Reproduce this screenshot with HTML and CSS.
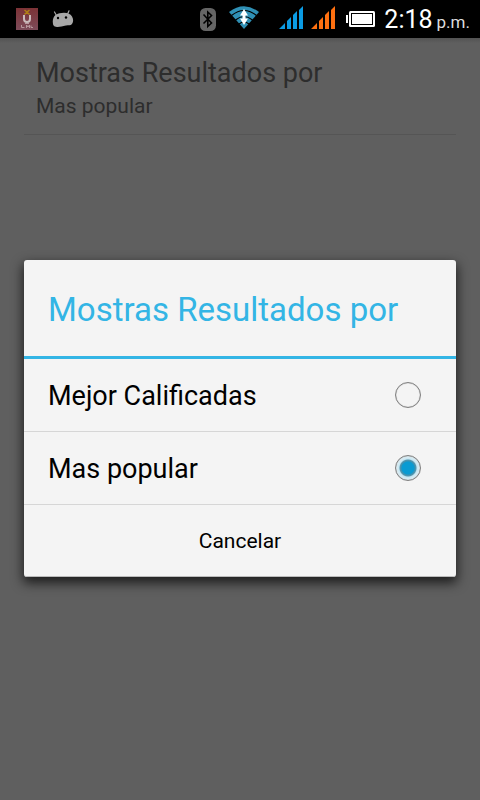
FILE: index.html
```html
<!DOCTYPE html>
<html lang="es">
<head>
<meta charset="utf-8">
<meta name="viewport" content="width=device-width, initial-scale=1">
<title>Mostras Resultados por</title>
<link rel="stylesheet" href="styles.css">
</head>
<body>
<header class="status">
  <div class="status-group notifications">
    <svg width="22" height="22" viewBox="0 0 22 22" aria-hidden="true">
      <defs><linearGradient id="app" x1="0" y1="0" x2="0" y2="1"><stop offset="0" stop-color="#7c3236"/><stop offset="1" stop-color="#7d4c5a"/></linearGradient></defs>
      <rect width="22" height="22" fill="url(#app)"/>
      <path d="M8.500 2l2.500 2 2.500-2M8.500 6.500l2.500-2.500 2.500 2.500" fill="none" stroke="#b08016" stroke-width="1.500"/>
      <path d="M8 7v4a3 3 0 0 0 6 0V7" fill="none" stroke="#cbbcbc" stroke-width="2"/>
      <path d="M9 15.500h4M5.500 17v2.500h3M10.500 20v-3l1.500 2 1.500-2v3M15 17.500v2h2" fill="none" stroke="#b8989d" stroke-width="1"/>
    </svg>
    <svg width="22" height="18" viewBox="0 0 22 18" aria-hidden="true">
      <path d="M2.500 2l2 3.500M17 .800l-1.500 3.500" stroke="#a8a8a8" stroke-width="1.200" stroke-linecap="round"/>
      <path d="M1 14C0 8 3 4 7.500 3.300C13 2 18 3 20 6.500C21.500 9 21.500 12 20 14C18.500 15.800 16.500 15 14 15.500C10 16 7 17.500 4 16.800C2 16.500 1.200 15.500 1 14Z" fill="#a8a8a8"/>
      <circle cx="6" cy="8" r="1.200"/><circle cx="14" cy="7.500" r="1.200"/>
    </svg>
  </div>
  <div class="status-group system">
    <svg class="bluetooth" width="16" height="22" viewBox="0 0 16 22" aria-hidden="true">
      <rect width="16" height="23" rx="5.500" fill="#656565"/>
      <path d="M3.500 6.500l8 8.500L7.800 18.500V4l3.700 3.500-8 8" fill="none" stroke="#000" stroke-width="1.600"/>
    </svg>
    <svg class="wifi" width="30" height="26" viewBox="0 0 30 26" aria-hidden="true">
      <path d="M0 6Q15-5.500 30 6L15 23Z" fill="#2f90b5"/>
      <path d="M2.500 9.500Q15-.500 27.500 9.500M6.500 14Q15 7 23.500 14M10 18q5-4 10 0" fill="none" stroke="#000" stroke-width="1.200"/>
      <path d="M15 3l4 6.500h-8zM15 19l-4-6.500h8z" fill="#fff"/>
      <path d="M13.500 9h3v5h-3z" fill="#fff"/>
    </svg>
    <svg class="signal-one" width="24" height="26" viewBox="0 0 24 26" aria-hidden="true">
      <path d="M0 23l6-6v6zM8 23v-8l4-4v12zM14 23V9l4-4v18zM20 23V4l4-4v23z" fill="#0b9be3"/>
    </svg>
    <svg class="signal-two" width="24" height="26" viewBox="0 0 24 26" aria-hidden="true">
      <path d="M0 23l6-6v6zM8 23v-8l4-4v12zM14 23V9l4-4v18zM20 23V4l4-4v23z" fill="#ff7010"/>
    </svg>
    <svg class="battery" width="29" height="16" viewBox="0 0 29 16" aria-hidden="true">
      <rect y="4" width="2" height="8" fill="#fff"/>
      <rect x="3" width="26" height="16" rx="1.500" fill="#fff"/>
      <rect x="5" y="2" width="22" height="12"/>
      <rect x="6" y="3" width="20" height="10" fill="#fff"/>
    </svg>
    <time class="clock" datetime="14:18">2:18<span class="meridiem">p.m.</span></time>
  </div>
</header>
<div class="screen">
  <main class="settings">
    <section class="preference">
      <h1 class="preference-title">Mostras Resultados por</h1>
      <p class="preference-summary">Mas popular</p>
    </section>
  </main>
  <div class="scrim">
    <form class="dialog" role="dialog" aria-labelledby="dialog-title">
      <h2 class="dialog-title" id="dialog-title">Mostras Resultados por</h2>
      <label class="option">Mejor Calificadas<input class="radio" type="radio" name="order" value="rating"></label>
      <label class="option">Mas popular<input class="radio" type="radio" name="order" value="popular" checked></label>
      <button class="cancel" type="button">Cancelar</button>
    </form>
  </div>
</div>
</body>
</html>
```
FILE: styles.css
```css
* {
  box-sizing: border-box;
}

body {
  margin: 0;
  min-height: 100vh;
  display: flex;
  flex-direction: column;
  background: #5f5f5f;
  font-family: Roboto, "Noto Sans", sans-serif;
}

.status {
  height: 38px;
  padding: 0 10px 0 16px;
  display: flex;
  align-items: center;
  justify-content: space-between;
  background: #000;
  color: #fff;
}

.status svg {
  display: block;
  flex: none;
}

.status-group {
  display: flex;
  align-items: center;
}

.notifications {
  gap: 14px;
}

.bluetooth {
  overflow: visible;
  margin-right: 13px;
}

.wifi {
  margin-right: 20px;
}

.signal-one {
  margin-right: 8px;
}

.signal-two {
  margin-right: 11px;
}

.battery {
  margin-right: 9px;
}

.clock {
  padding-top: 4px;
  font-size: 25px;
  line-height: 34px;
  white-space: nowrap;
}

.meridiem {
  margin-left: 4px;
  font-size: 17px;
  color: #ddd;
}

.screen {
  position: relative;
  flex: 1;
  background: linear-gradient(#525252, #5f5f5f 5px);
}

.settings {
  padding: 0 24px;
}

.preference {
  padding: 18px 12px 13px;
  border-bottom: 1px solid #555;
  color: #2d2d2d;
}

.preference-title {
  margin: 0;
  font-size: 27px;
  font-weight: 400;
  line-height: 34px;
}

.preference-summary {
  margin: 0;
  padding-top: 2px;
  font-size: 21px;
  line-height: 29px;
}

.scrim {
  position: absolute;
  inset: 0;
  padding: 24px 24px 25px;
  display: flex;
  align-items: center;
}

.dialog {
  flex: 1;
  border-radius: 3px;
  background: #f4f4f4;
  box-shadow: 0 5px 12px 1px rgba(0, 0, 0, 0.7);
  color: #000;
}

.dialog-title {
  margin: 0;
  padding: 4px 24px 0;
  border-bottom: 3px solid #33b5e5;
  color: #33b5e5;
  font-size: 33px;
  font-weight: 400;
  line-height: 92px;
}

.option {
  padding: 2px 35px 0 24px;
  border-bottom: 1px solid #d6d6d6;
  display: flex;
  align-items: center;
  justify-content: space-between;
  font-size: 27px;
  line-height: 70px;
}

.radio {
  appearance: none;
  width: 26px;
  height: 26px;
  margin: 0 0 2px;
  border: 1px solid #808080;
  border-radius: 50%;
  box-shadow: inset 0 0 1px #808080;
}

.radio:checked {
  background: radial-gradient(circle, #0a9bd2 6px, #3e91b0 7px, #5598b0 8px, #c6e6f2 9px, #e6f1f5 12px);
}

.cancel {
  display: block;
  width: 100%;
  padding: 1px 0 0;
  border: 0;
  border-bottom: 1px solid #bbb;
  border-radius: 0 0 3px 3px;
  background: none;
  color: #000;
  font-family: inherit;
  font-size: 21px;
  line-height: 70px;
}
```
